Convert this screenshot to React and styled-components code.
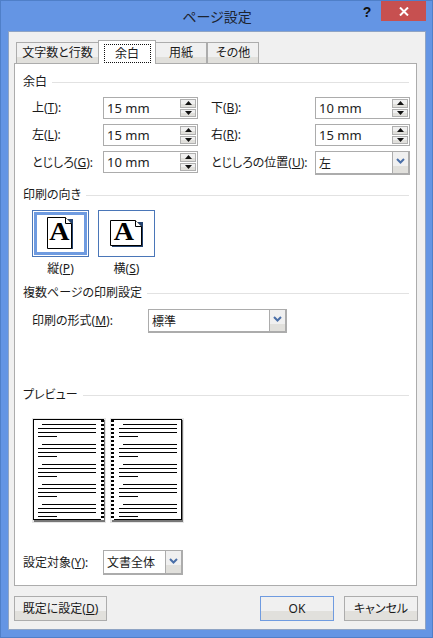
import React from "react";
import styled, { createGlobalStyle } from "styled-components";

const Global = createGlobalStyle`
  html, body { margin: 0; padding: 0; background: #6495e4; }
  body { width: 433px; height: 638px; overflow: hidden; font-family: "Noto Sans", "Noto Sans CJK JP", "Liberation Sans", sans-serif; font-size: 12px; color: #1a1a1a; font-feature-settings: "palt"; }
  * { box-sizing: border-box; }
`;

const Window = styled.div`
  width: 433px; height: 638px; background: #6495e4; border: 1px solid #4f7fc8;
  display: flex; flex-direction: column; padding: 0 6px 7px 7px;
`;
const TitleBar = styled.div`
  height: 30px; display: grid; grid-template-columns: 1fr auto 1fr; align-items: start; flex: none;
`;
const Title = styled.div`
  grid-column: 2; font-size: 14px; line-height: 18px; padding-top: 7px; color: #1c2430;
`;
const Controls = styled.div`
  grid-column: 3; display: flex; justify-content: flex-end; align-items: flex-start;
`;
const Help = styled.span`
  font: bold 14px/22px "Liberation Sans", sans-serif; color: #111; width: 28px; text-align: center;
`;
const Close = styled.div`
  width: 45px; height: 20px; background: #c75050; display: flex; align-items: center; justify-content: center;
`;
const Client = styled.div`
  flex: 1; background: #f0f0f0; border: 1px solid #8fa4c4; padding: 9px 8px 8px 5px;
  display: flex; flex-direction: column; width: 418px;
`;
const Tabs = styled.div`
  display: flex; height: 23px; align-items: flex-end; padding-left: 2px; position: relative; z-index: 1; margin-bottom: -1px; flex: none;
`;
const Tab = styled.div`
  height: ${p => (p.$active ? "24px" : "22px")};
  width: ${p => p.$w}px;
  margin-left: ${p => (p.$active ? "-1px" : "0")};
  margin-right: ${p => (p.$active ? "-1px" : "0")};
  border: 1px solid #acacac;
  border-bottom: ${p => (p.$active ? "none" : "1px solid #acacac")};
  background: ${p => (p.$active ? "#fff" : "linear-gradient(#f0f0f0 0 70%, #e1e0dc 70%)")};
  display: flex; align-items: center; justify-content: center;
  position: relative; z-index: ${p => (p.$active ? 2 : 0)};
  line-height: 16px; font-size: 12px;
`;
const Focus = styled.span`
  border: 1px dotted #111; width: 47px; height: 19px; display: flex; align-items: center; justify-content: center; margin-top: 2px;
`;
const Panel = styled.div`
  height: 523px; width: 403px; background: #fff; border: 1px solid #acacac; padding: 9px 7px 0 8px; flex: none;
  display: flex; flex-direction: column;
`;
const Section = styled.div`
  display: flex; align-items: center; gap: 5px; height: 18px; line-height: 18px; flex: none;
  margin-top: ${p => p.$top || 0}px;
  &::after { content: ""; flex: 1; height: 1px; background: #e2e2e2; }
`;
const MarginGrid = styled.div`
  display: grid; grid-template-columns: 71px 95px 13px 104px 95px; margin: 6px 0 0 9px; row-gap: 5px; flex: none;
`;
const Label = styled.label`
  display: flex; align-items: center; line-height: 16px; white-space: pre;
  & u { text-decoration: underline; text-underline-offset: 1px; }
`;
const Spin = styled.div`
  height: 22px; border: 1px solid #acacac; display: flex; background: #fff; align-items: stretch; justify-content: space-between;
  padding: 1px 1px 1px 3px;
  font: 13px/18px "Noto Sans", "Liberation Sans", sans-serif; color: #222;
`;
const SpinBtns = styled.div`
  width: 16px; display: flex; flex-direction: column; gap: 1px;
`;
const SpinBtn = styled.div`
  flex: 1; border: 1px solid #b0b0b0; background: linear-gradient(#f0f0f0 0 55%, #e1e0dc 55%);
  display: flex; align-items: center; justify-content: center;
`;
const Drop = styled.div`
  height: ${p => p.$h}px; width: ${p => (p.$w ? p.$w + "px" : "auto")}; border: 1px solid #acacac; border-width: 1px 2px 2px 1px; background: #fff;
  display: flex; align-items: stretch; flex: none;
`;
const DropText = styled.div`
  flex: 1; padding-left: 3px; display: flex; align-items: center; font-size: 12px;
`;
const DropBtn = styled.div`
  width: 16px; border-left: 1px solid #acacac; background: linear-gradient(#f0f0f0 0 65%, #e1e0dc 65%);
  display: flex; align-items: center; justify-content: center; padding-bottom: 3px;
`;
const OrientRow = styled.div`
  display: flex; gap: 9px; margin: 6px 0 0 9px; flex: none;
`;
const Orient = styled.div`
  width: 57px; display: flex; flex-direction: column; align-items: center; line-height: 16px;
`;
const OrientBtn = styled.div`
  width: 57px; height: 47px; border: 1px solid #4a76b8;
  box-shadow: ${p => (p.$active ? "inset 0 0 0 1px #fff, inset 0 0 0 4px #6f9be0" : "none")};
  display: flex; align-items: center; justify-content: center; margin-bottom: 4px;
`;
const FormatRow = styled.div`
  display: flex; align-items: center; margin: 7px 0 0 9px; flex: none;
`;
const FormatLabel = styled(Label)`
  width: 116px;
`;
const PreviewArt = styled.svg`
  display: block; margin: 14px 0 0 9px; flex: none;
`;
const TargetRow = styled.div`
  display: flex; align-items: center; margin-top: 27px; flex: none;
`;
const TargetLabel = styled(Label)`
  width: 80px;
`;
const Footer = styled.div`
  display: flex; margin-top: 10px; flex: none; width: 405px;
`;
const Button = styled.div`
  height: 25px; width: ${p => p.$w}px; margin-left: ${p => p.$ml || 0}px;
  border: 1px solid ${p => (p.$primary ? "#6f9be0" : "#acacac")};
  background: linear-gradient(#f0f0f0 0 60%, #e1e0dc 60%);
  display: flex; align-items: center; justify-content: center; line-height: 16px;
  & u { text-underline-offset: 1px; }
`;

const Up = () => (
  <svg width="7" height="4" viewBox="0 0 7 4"><path d="M3.5 0 7 4H0z" fill="#111" /></svg>
);
const Down = () => (
  <svg width="7" height="4" viewBox="0 0 7 4"><path d="M0 0h7L3.5 4z" fill="#111" /></svg>
);
const Chevron = () => (
  <svg width="9" height="6" viewBox="0 0 9 6"><path d="M1 1l3.5 3.5L8 1" fill="none" stroke="#4a6fa8" strokeWidth="2" /></svg>
);

const Field = ({ value }) => (
  <Spin>
    <span>{value}</span>
    <SpinBtns>
      <SpinBtn><Up /></SpinBtn>
      <SpinBtn><Down /></SpinBtn>
    </SpinBtns>
  </Spin>
);

const Select = ({ w, h, children }) => (
  <Drop $w={w} $h={h}>
    <DropText>{children}</DropText>
    <DropBtn><Chevron /></DropBtn>
  </Drop>
);

const PortraitIcon = () => (
  <svg width="27" height="33" viewBox="0 0 27 33">
    <path d="M2 2h24v30H2z" fill="#23426f" />
    <path d="M.5.5h18l6 6v25H.5z" fill="#fff" stroke="#000" />
    <path d="M18.5.5v6h6" fill="#fff" stroke="#000" />
    <text x="12.5" y="23" textAnchor="middle" fontFamily="Liberation Serif" fontWeight="bold" fontSize="25" fill="#000" transform="translate(12.5 0) scale(1.12 1) translate(-12.5 0)">A</text>
  </svg>
);
const LandscapeIcon = () => (
  <svg width="33" height="33" viewBox="0 -3 33 33">
    <path d="M2 2h31v25H2z" fill="#23426f" />
    <path d="M.5.5h25l6 6v19H.5z" fill="#fff" stroke="#000" />
    <path d="M25.5.5v6h6" fill="#fff" stroke="#000" />
    <text x="14" y="20" textAnchor="middle" fontFamily="Liberation Serif" fontWeight="bold" fontSize="25" fill="#000" transform="translate(14 0) scale(1.12 1) translate(-14 0)">A</text>
  </svg>
);

const Page = ({ x, mirror }) => {
  const groups = [0, 1, 2, 3, 4];
  const holes = Array.from({ length: 25 }, (_, i) => i);
  const ox = mirror ? 7 : 4;
  return (
    <g transform={`translate(${x} 0)`}>
      <rect x="-1" y="-1" width="74" height="105" fill="#e6e6e6" />
      <rect x="1" y="1" width="71" height="102" fill="#777" />
      <rect x="0.5" y="0.5" width="70" height="100" fill="#fff" stroke="#000" />
      {groups.map(g => {
        const y = 5.5 + g * 20;
        return (
          <g key={g} stroke="#000" strokeWidth="1">
            <path d={`M${ox + 5} ${y}H${ox + 59}`} />
            <path d={`M${ox + 1} ${y + 4}H${ox + 59}`} />
            <path d={`M${ox + 1} ${y + 8}H${ox + 59}`} />
            <path d={`M${ox + 1} ${y + 12}H${ox + 20}`} />
          </g>
        );
      })}
      {holes.map(i => (
        <g key={i}>
          <rect x={mirror ? 0 : 68} y={1 + i * 4} width="3" height="2" fill="#000" />
          <rect x={mirror ? 0 : 68} y={3 + i * 4} width="3" height="2" fill="#fff" />
        </g>
      ))}
    </g>
  );
};

export default function App() {
  return (
    <>
      <Global />
      <Window>
        <TitleBar>
          <Title>ページ設定</Title>
          <Controls>
            <Help>?</Help>
            <Close>
              <svg width="10" height="9" viewBox="0 0 10 9"><path d="M1 .5l8 8M9 .5l-8 8" stroke="#fff" strokeWidth="2" /></svg>
            </Close>
          </Controls>
        </TitleBar>
        <Client>
          <Tabs>
            <Tab $w={83}>文字数と行数</Tab>
            <Tab $active $w={58}><Focus>余白</Focus></Tab>
            <Tab $w={52}>用紙</Tab>
            <Tab $w={52}>その他</Tab>
          </Tabs>
          <Panel>
            <Section>余白</Section>
            <MarginGrid>
              <Label>上(<u>T</u>):</Label>
              <Field value="15 mm" />
              <span />
              <Label>下(<u>B</u>):</Label>
              <Field value="10 mm" />
              <Label>左(<u>L</u>):</Label>
              <Field value="15 mm" />
              <span />
              <Label>右(<u>R</u>):</Label>
              <Field value="15 mm" />
              <Label>とじしろ(<u>G</u>):</Label>
              <Field value="10 mm" />
              <span />
              <Label>とじしろの位置(<u>U</u>):</Label>
              <Select h={24}>左</Select>
            </MarginGrid>
            <Section $top={11}>印刷の向き</Section>
            <OrientRow>
              <Orient>
                <OrientBtn $active><PortraitIcon /></OrientBtn>
                <span>縦(<u>P</u>)</span>
              </Orient>
              <Orient>
                <OrientBtn><LandscapeIcon /></OrientBtn>
                <span>横(<u>S</u>)</span>
              </Orient>
            </OrientRow>
            <Section $top={7}>複数ページの印刷設定</Section>
            <FormatRow>
              <FormatLabel>印刷の形式(<u>M</u>):</FormatLabel>
              <Select w={139} h={24}>標準</Select>
            </FormatRow>
            <Section $top={53}>プレビュー</Section>
            <PreviewArt width="152" height="105" viewBox="-1 -1 152 105">
              <Page x={0} />
              <Page x={78} mirror />
            </PreviewArt>
            <TargetRow>
              <TargetLabel>設定対象(<u>Y</u>):</TargetLabel>
              <Select w={80} h={25}>文書全体</Select>
            </TargetRow>
          </Panel>
          <Footer>
            <Button $w={93}>既定に設定(<u>D</u>)</Button>
            <Button $primary $w={74} $ml={153}>OK</Button>
            <Button $w={74} $ml={10}>キャンセル</Button>
          </Footer>
        </Client>
      </Window>
    </>
  );
}
